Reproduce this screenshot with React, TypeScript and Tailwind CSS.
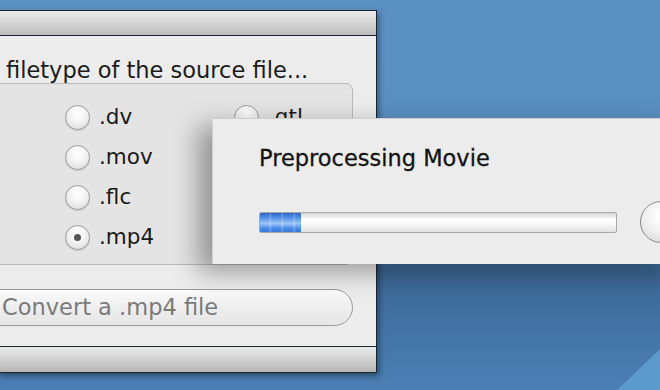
import React from "react"

const font = { fontFamily: '"DejaVu Sans", "Liberation Sans", sans-serif' }

function Radio({ label, checked }: { label: string; checked?: boolean }) {
  return (
    <div className="flex items-center h-[40px]">
      <div className="w-[25px] h-[25px] shrink-0 rounded-full border-[1.5px] border-[#9c9c9c] bg-[radial-gradient(circle_at_50%_35%,#ffffff_0%,#f2f2f2_45%,#d6d6d6_100%)] shadow-[0_1px_1px_rgba(0,0,0,0.15)] flex items-center justify-center">
        {checked && <div className="w-[7px] h-[7px] rounded-full bg-[#555]" />}
      </div>
      <span className="ml-[9px] text-[21.5px] text-[#1a1a1a] leading-none">{label}</span>
    </div>
  )
}

export default function App() {
  return (
    <div
      className="relative w-[660px] h-[390px] overflow-hidden bg-[linear-gradient(180deg,#5b90c3_0%,#5a8ec1_60%,#3b6794_70%,#4678ab_90%,#4b7fb3_100%)]"
      style={font}
    >
      {/* lighter diagonal in the corner */}
      <div className="absolute inset-0 bg-[#5c9bcb] [clip-path:polygon(93.5%_100%,100%_89.5%,100%_100%)]" />

      {/* main window */}
      <div className="absolute left-[-2px] top-[10px] w-[379px] h-[363px] border-[1.5px] border-[#1c2430] flex flex-col shadow-[2px_3px_6px_rgba(0,0,0,0.4)]">
        <div className="h-[25px] bg-[linear-gradient(180deg,#ececec,#bcbcbc)] border-b-[1.5px] border-[#1c2430]" />
        <div className="flex-1 bg-[#ececec] pt-[22px] relative">
          <div className="pl-[7px] text-[22.5px] leading-[24px] text-[#1a1a1a]">filetype of the source file...</div>
          <div className="mt-[1px] ml-[-12px] w-[366px] h-[182px] rounded-[7px] border border-[#b9b9b9] bg-[#e4e4e4] pt-[13px] pl-[77px] flex">
            <div className="flex flex-col w-[169px]">
              <Radio label=".dv" />
              <Radio label=".mov" />
              <Radio label=".flc" />
              <Radio label=".mp4" checked />
            </div>
            <div className="flex flex-col">
              <Radio label=".qtl" />
            </div>
          </div>
          <div className="mt-[24px] ml-[-22px] w-[376px] h-[37px] rounded-full border-[1.5px] border-[#9a9a9a] bg-[linear-gradient(180deg,#fbfbfb,#eeeeee_50%,#e6e6e6)] flex items-center pl-[24px] text-[22.5px] text-[#7a7a7a]">
            Convert a .mp4 file
          </div>
        </div>
        <div className="h-[26px] bg-[linear-gradient(180deg,#ebebeb,#b5b5b5)] border-t-[1.5px] border-[#1c2430]" />
      </div>

      {/* progress sheet */}
      <div className="absolute left-[212px] top-[118px] w-[470px] h-[146px] bg-[#ececec] border-t border-l border-[#cfcfcf] shadow-[-14px_8px_24px_rgba(0,0,0,0.35)] pt-[26px] pl-[46px]">
        <div className="text-[22.5px] leading-[26px] text-[#141414] [-webkit-text-stroke:0.3px_#141414]">Preprocessing Movie</div>
        <div className="mt-[30px] flex items-center">
          <div className="relative w-[361px] h-[21px] rounded-[2px] border border-[#a9a9a9] bg-[linear-gradient(180deg,#d6d6d6,#ffffff_35%,#f6f6f6_60%,#e2e2e2)] overflow-hidden">
            <div className="absolute left-0 top-0 h-full w-[41px] bg-[linear-gradient(180deg,#2d63c8_0%,#5c98ea_30%,#9cc6f6_55%,#4b8ce6_80%,#3a78d8_100%)]" />
            <div className="absolute left-0 top-0 h-full w-[41px] bg-[repeating-linear-gradient(90deg,rgba(255,255,255,0)_0px,rgba(255,255,255,0)_9px,rgba(255,255,255,0.25)_10px,rgba(255,255,255,0)_12px)]" />
          </div>
          <div className="ml-[23px] w-[42px] h-[42px] rounded-full border-[1.5px] border-[#8a8a8a] bg-[radial-gradient(circle_at_50%_35%,#ffffff,#f0f0f0_50%,#d4d4d4)] shrink-0" />
        </div>
      </div>
    </div>
  )
}
